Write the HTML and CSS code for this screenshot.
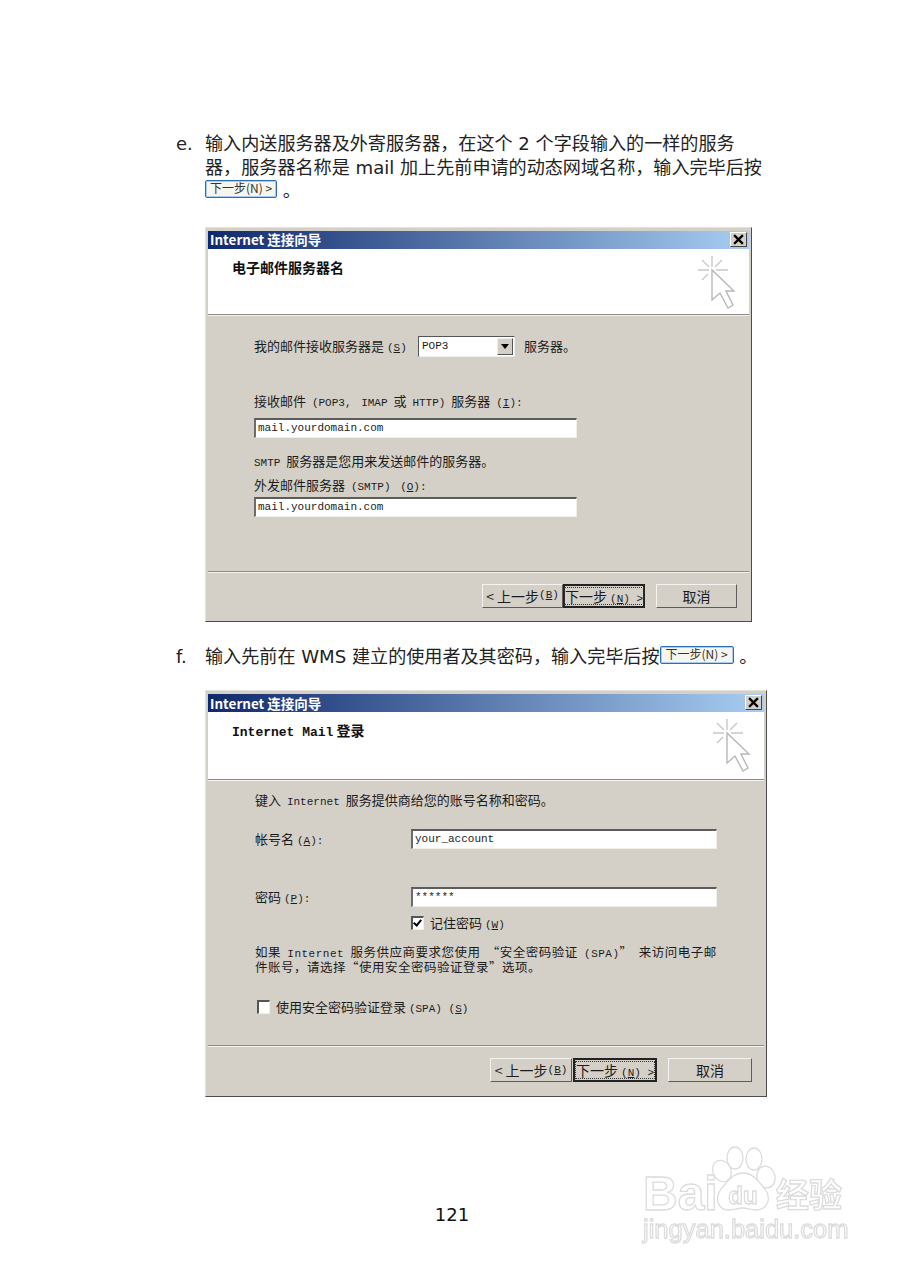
FILE: index.html
```html
<!DOCTYPE html>
<html lang="zh-CN">
<head>
    <meta charset="UTF-8">
    <meta name="viewport" content="width=device-width, initial-scale=1.0">
    <title>121</title>
    <link rel="stylesheet" href="styles.css">
</head>
<body>

<svg class="defs" width="0" height="0">
    <symbol id="cursor" viewBox="0 0 40 56">
        <path d="M14 0v11M14 20v1M0 14h11M18 14h12M4 4l7 7M24 4l-7 7M4 24l6-6" fill="none" stroke="#c8c8c8" stroke-width="1.4"/>
        <path d="M14 14v30l8-7 8 15 5-3-7-14h8z" fill="#fff" stroke="#b8b8b8" stroke-width="1.4"/>
    </symbol>
    <symbol id="close-x" viewBox="0 0 10 10">
        <path d="M1 1l8 8M9 1l-8 8" stroke="#000" stroke-width="2" fill="none"/>
    </symbol>
</svg>

<main class="page">
    <div class="step">
        <span class="step-letter">e.</span>
        <p>输入内送服务器及外寄服务器，在这个 2 个字段输入的一样的服务<br>器，服务器名称是 mail 加上先前申请的动态网域名称，输入完毕后按<br><span class="mini-btn">下一步(N) &gt;</span> 。</p>
    </div>

    <section class="dialog dialog-server">
        <div class="titlebar"><span>Internet 连接向导</span><span class="close"><svg><use href="#close-x"/></svg></span></div>
        <div class="banner">
            <h2>电子邮件服务器名</h2>
            <svg class="cursor"><use href="#cursor"/></svg>
        </div>
        <div class="content">
            <div class="select-row">
                <span class="select-label">我的邮件接收服务器是 <span class="lat">(<u>S</u>)</span></span>
                <span class="select"><span class="lat">POP3</span><span class="arrow"></span></span>
                <span>服务器。</span>
            </div>
            <div class="line gap-36">接收邮件 <span class="lat">(POP3, IMAP</span> 或 <span class="lat">HTTP)</span> 服务器 <span class="lat">(<u>I</u>):</span></div>
            <div class="field wide gap-9">mail.yourdomain.com</div>
            <div class="line gap-15"><span class="lat">SMTP</span> 服务器是您用来发送邮件的服务器。</div>
            <div class="line gap-8">外发邮件服务器 <span class="lat">(SMTP) (<u>O</u>):</span></div>
            <div class="field wide gap-4">mail.yourdomain.com</div>
        </div>
        <div class="buttons">
            <span class="btn">&lt; 上一步 <span class="lat">(<u>B</u>)</span></span>
            <span class="btn btn-default"><span class="focus">下一步 <span class="lat">(<u>N</u>) &gt;</span></span></span>
            <span class="btn btn-cancel">取消</span>
        </div>
    </section>

    <div class="step step-f">
        <span class="step-letter">f.</span>
        <p>输入先前在 WMS 建立的使用者及其密码，输入完毕后按<span class="mini-btn">下一步(N) &gt;</span> 。</p>
    </div>

    <section class="dialog dialog-login">
        <div class="titlebar"><span>Internet 连接向导</span><span class="close"><svg><use href="#close-x"/></svg></span></div>
        <div class="banner">
            <h2><span class="lat-bold">Internet Mail</span> 登录</h2>
            <svg class="cursor"><use href="#cursor"/></svg>
        </div>
        <div class="content">
            <div class="line">键入 <span class="lat">Internet</span> 服务提供商给您的账号名称和密码。</div>
            <div class="form-row gap-21">
                <span>帐号名 <span class="lat">(<u>A</u>):</span></span>
                <div class="field">your_account</div>
            </div>
            <div class="form-row gap-38">
                <span>密码 <span class="lat">(<u>P</u>):</span></span>
                <div class="field">******</div>
            </div>
            <div class="check-row check-indent gap-8">
                <span class="checkbox checked"></span>
                <span>记住密码 <span class="lat">(<u>W</u>)</span></span>
            </div>
            <p class="note">如果 <span class="lat">Internet</span> 服务供应商要求您使用 “安全密码验证 <span class="lat">(SPA)</span>” 来访问电子邮<br>件账号，请选择“使用安全密码验证登录”选项。</p>
            <div class="check-row gap-28">
                <span class="checkbox"></span>
                <span>使用安全密码验证登录 <span class="lat">(SPA) (<u>S</u>)</span></span>
            </div>
        </div>
        <div class="buttons">
            <span class="btn">&lt; 上一步 <span class="lat">(<u>B</u>)</span></span>
            <span class="btn btn-default"><span class="focus">下一步 <span class="lat">(<u>N</u>) &gt;</span></span></span>
            <span class="btn btn-cancel">取消</span>
        </div>
    </section>

    <footer class="page-number">121</footer>
</main>

<!-- watermark sits over the page corner -->
<svg class="watermark" width="240" height="130" viewBox="620 1140 240 130">
    <g class="wm-shape">
        <ellipse cx="722" cy="1171" rx="9" ry="11" transform="rotate(-25 722 1171)"/>
        <ellipse cx="735" cy="1158" rx="8" ry="11"/>
        <ellipse cx="754" cy="1159" rx="8" ry="11"/>
        <ellipse cx="766" cy="1177" rx="9" ry="11" transform="rotate(-15 766 1177)"/>
        <text x="643" y="1210" class="wm-bai">Bai</text>
        <path d="M743 1173c10 0 15 8 22 16 7 10 2 21-9 21-5 0-9-2-13-2s-9 2-14 2c-11 0-15-11-8-21 7-8 12-16 22-16z"/>
        <text x="743" y="1204" class="wm-du">du</text>
        <text x="776" y="1207" class="wm-cn">经验</text>
        <text x="643" y="1238" class="wm-url">jingyan.baidu.com</text>
    </g>
</svg>

</body>
</html>
```

FILE: styles.css
```css
html, body {
    margin: 0;
    padding: 0;
    background: #fff;
}
body {
    position: relative;
    height: 1280px;
    overflow: hidden;
    font-family: "Noto Sans CJK SC", sans-serif;
    color: #222;
}
.defs {
    position: absolute;
}
.page {
    padding: 132px 0 0 176px;
}

/* document text */
.step {
    display: flex;
    width: 600px;
    font-family: "DejaVu Sans", "Noto Sans CJK SC", sans-serif;
    font-size: 18.1px;
    line-height: 23.5px;
}
.step p {
    margin: 0;
    flex: 1;
    white-space: nowrap;
}
.step-letter {
    width: 29px;
    flex: none;
    font-size: 18px;
}
.step-f {
    margin-top: 23px;
}
.mini-btn {
    display: inline-block;
    box-sizing: border-box;
    width: 72px;
    height: 18px;
    line-height: 14px;
    vertical-align: 4px;
    border: 1px solid #2d6fb5;
    border-radius: 2px;
    box-shadow: inset 0 0 0 1px #a9cbed;
    background: #f6f6f0;
    font-family: "Noto Sans CJK SC", sans-serif;
    font-size: 12px;
    text-align: center;
    color: #333;
}
.step-f .mini-btn {
    width: 74px;
}

/* wizard dialogs */
.dialog {
    box-sizing: border-box;
    display: flex;
    flex-direction: column;
    margin: 24px 0 0 29px;
    padding: 3px 2px 0;
    background: #d4d0c8;
    border: 1px solid;
    border-color: #e4e2dc #4c4c4c #4c4c4c #e4e2dc;
    font-size: 13px;
    line-height: 16px;
    color: #1c1c1c;
}
.dialog-server {
    width: 547px;
    height: 395px;
}
.dialog-login {
    width: 562px;
    height: 407px;
    margin-top: 22px;
}
.titlebar {
    box-sizing: border-box;
    display: flex;
    justify-content: space-between;
    align-items: center;
    height: 18px;
    padding: 0 2px 1px;
    background: linear-gradient(90deg, #0f2a6c, #a8cdf2);
    color: #fff;
    font-size: 13.5px;
    font-weight: 700;
}
.close {
    box-sizing: border-box;
    display: flex;
    width: 17px;
    height: 15px;
    padding: 1px 2px;
    background: #d4d0c8;
    border: 1px solid;
    border-color: #fff #444 #444 #fff;
}
.close svg {
    width: 100%;
    height: 100%;
}
.banner {
    display: flex;
    justify-content: space-between;
    height: 65px;
    background: #fff;
    border-bottom: 1px solid #8c8a84;
    box-shadow: 0 1px 0 #f4f3ef;
}
.dialog-login .banner {
    height: 67px;
}
.banner h2 {
    margin: 10px 0 0 24px;
    height: 16px;
    font-size: 14px;
    line-height: 16px;
    font-weight: 700;
    color: #111;
}
.cursor {
    width: 40px;
    height: 56px;
    margin: 7px 11px 0 0;
}
.content {
    flex: 1;
    padding-left: 46px;
}
.dialog-server .content {
    padding-top: 21px;
}
.dialog-login .content {
    padding: 12px 0 0 47px;
}
.lat {
    font-family: "Liberation Mono", monospace;
    font-size: 11px;
    line-height: 1;
}
.lat-bold {
    font-family: "Liberation Mono", monospace;
    font-size: 13px;
    line-height: 1;
}
.line {
    height: 16px;
    white-space: nowrap;
    word-spacing: 3px;
}
.gap-4 { margin-top: 4px; }
.gap-8 { margin-top: 8px; }
.gap-9 { margin-top: 9px; }
.gap-15 { margin-top: 15px; }
.gap-21 { margin-top: 21px; }
.gap-28 { margin-top: 28px; }
.gap-36 { margin-top: 36px; }
.gap-38 { margin-top: 38px; }

.select-row {
    display: flex;
    align-items: center;
    height: 21px;
}
.select-label {
    width: 164px;
}
.select {
    box-sizing: border-box;
    display: flex;
    justify-content: space-between;
    align-items: center;
    width: 97px;
    height: 21px;
    margin-right: 9px;
    padding: 0 1px 0 3px;
    background: #fff;
    border: 1px solid;
    border-color: #555 #eee #eee #555;
}
.arrow {
    box-sizing: border-box;
    position: relative;
    width: 16px;
    height: 17px;
    background: #d4d0c8;
    border: 1px solid;
    border-color: #eee #555 #555 #eee;
}
.arrow::after {
    content: "";
    position: absolute;
    left: 3px;
    top: 5px;
    border: 4px solid transparent;
    border-top: 5px solid #000;
    border-bottom: 0;
}
.field {
    box-sizing: border-box;
    height: 20px;
    padding: 0 2px;
    background: #fff;
    border-style: solid;
    border-width: 2px 1px 1px 2px;
    border-color: #5c5c5c #f0eee8 #f0eee8 #6c6c6c;
    font-family: "Liberation Mono", monospace;
    font-size: 11px;
    line-height: 16px;
    color: #222;
}
.wide {
    width: 323px;
}
.form-row {
    display: grid;
    grid-template-columns: 156px 306px;
    align-items: center;
    height: 20px;
}
.check-row {
    display: flex;
    align-items: center;
    gap: 6px;
    height: 16px;
}
.check-indent {
    margin-left: 156px;
}
.dialog-login .check-row:last-child {
    margin-left: 2px;
}
.checkbox {
    box-sizing: border-box;
    position: relative;
    width: 13px;
    height: 14px;
    background: #fff;
    border-style: solid;
    border-width: 2px 1px 1px 2px;
    border-color: #555 #eee #eee #555;
}
.checked::after {
    content: "";
    position: absolute;
    left: 2px;
    top: 0;
    width: 3px;
    height: 6px;
    border: solid #000;
    border-width: 0 2px 2px 0;
    transform: rotate(40deg);
}
.note {
    height: 26px;
    margin: 14px 0 0;
    font-size: 12.5px;
    line-height: 13px;
    letter-spacing: 0.5px;
    word-spacing: 3px;
    white-space: nowrap;
}
.buttons {
    display: flex;
    justify-content: flex-end;
    height: 48px;
    padding: 12px 12px 0 0;
    box-sizing: border-box;
    border-top: 1px solid #8c8a84;
    box-shadow: inset 0 1px 0 #f4f3ef;
    margin-bottom: 2px;
}
.dialog-login .buttons {
    margin-bottom: 3px;
}
.btn {
    box-sizing: border-box;
    display: flex;
    align-items: center;
    justify-content: center;
    width: 81px;
    height: 24px;
    background: #d4d0c8;
    border: 1px solid;
    border-color: #f4f3ef #5c5c5c #5c5c5c #f4f3ef;
    font-size: 14px;
    white-space: nowrap;
}
.btn-default {
    width: 82px;
    border: 2px solid #222;
    padding: 1px;
}
.focus {
    flex: 1;
    height: 100%;
    box-sizing: border-box;
    border: 1px dotted #333;
    line-height: 16px;
    text-align: center;
}
.btn-cancel {
    margin-left: 11px;
}
.dialog-login .btn {
    width: 82px;
}
.dialog-login .btn-default {
    width: 84px;
    margin-left: 1px;
}
.dialog-login .btn-cancel {
    width: 84px;
}

.page-number {
    position: absolute;
    left: 0;
    width: 904px;
    top: 1204px;
    text-align: center;
    font-family: "DejaVu Sans", sans-serif;
    font-size: 18px;
    line-height: 22px;
    color: #111;
}

/* watermark */
.watermark {
    position: absolute;
    left: 620px;
    top: 1140px;
    filter: blur(0.6px);
}
.wm-shape {
    fill: #fff;
    stroke: #dcdcdc;
    stroke-width: 1.3;
}
.wm-bai {
    font: 700 48px "Liberation Sans", sans-serif;
}
.wm-du {
    font: 700 24px "Liberation Sans", sans-serif;
    text-anchor: middle;
}
.wm-cn {
    font: 700 33px "Noto Sans CJK SC", sans-serif;
}
.wm-url {
    font: 400 25.5px "Liberation Sans", sans-serif;
}
```
